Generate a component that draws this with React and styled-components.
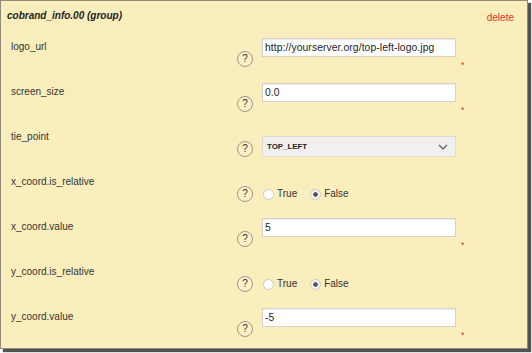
import React from "react";
import styled, { createGlobalStyle } from "styled-components";

const Global = createGlobalStyle`
  html, body { margin: 0; padding: 0; background: #ffffff; }
  body { width: 532px; height: 353px; overflow: hidden; font-family: "Liberation Sans", Arial, sans-serif; }
`;

const Panel = styled.div`
  box-sizing: border-box;
  width: 528px;
  height: 349px;
  background: #faeebd;
  border: 1px solid #8e8a7c;
  box-shadow: 3px 3px 1px rgba(0, 0, 0, 0.68);
  display: flex;
  flex-direction: column;
  overflow: hidden;
`;

const Header = styled.div`
  flex: none;
  height: 37px;
  display: flex;
  align-items: flex-start;
  justify-content: space-between;
  padding: 0 13px 0 6px;
  box-sizing: border-box;
`;

const Title = styled.div`
  margin-top: 9px;
  font-size: 10px;
  line-height: 12px;
  font-weight: bold;
  font-style: italic;
  color: #222;
`;

const Delete = styled.a`
  margin-top: 11px;
  font-size: 10px;
  line-height: 12px;
  color: #e8332f;
  cursor: pointer;
`;

const Row = styled.div`
  flex: none;
  height: 45px;
  display: flex;
  align-items: flex-start;
`;

const Label = styled.div`
  box-sizing: border-box;
  width: 236px;
  padding-left: 10px;
  margin-top: 3px;
  font-size: 10px;
  line-height: 12px;
  color: #333;
`;

const Help = styled.div`
  box-sizing: border-box;
  width: 16px;
  height: 16px;
  margin-top: 13px;
  border-radius: 50%;
  border: 1px solid #9a968a;
  display: flex;
  align-items: center;
  justify-content: center;
  font-size: 10px;
  line-height: 10px;
  color: #333;
  flex: none;
  background: #fbf1c8;
`;

const Control = styled.div`
  width: 194px;
  margin-left: 9px;
  margin-top: ${(p) => p.$top || 0}px;
  display: flex;
  align-items: center;
  flex: none;
`;

const TextInput = styled.input`
  box-sizing: border-box;
  width: 194px;
  height: 19px;
  margin: 0;
  border: 1px solid #d6d2c4;
  box-shadow: inset 0 1px 1px rgba(0, 0, 0, 0.08);
  background: #fff;
  padding: 0 2px;
  font-family: "Liberation Sans", Arial, sans-serif;
  font-size: 10.3px;
  letter-spacing: 0.1px;
  color: #222;
  outline: none;
`;

const Select = styled.div`
  box-sizing: border-box;
  width: 195px;
  height: 21px;
  border: 1px solid #dedbd2;
  background: #f1f0ee;
  display: flex;
  align-items: center;
  justify-content: space-between;
  padding: 0 7px 0 4px;
  font-size: 7.9px;
  font-weight: bold;
  color: #222;
`;

const Radios = styled.div`
  display: flex;
  align-items: center;
`;

const RadioCircle = styled.span`
  box-sizing: border-box;
  width: 11px;
  height: 11px;
  border-radius: 50%;
  border: 1px solid #cfcbbd;
  background: ${(p) => (p.$on ? "radial-gradient(circle, #555 0 2px, #f4f4f4 2.5px)" : "#fff")};
  margin-left: ${(p) => (p.$first ? 1 : 13)}px;
  flex: none;
`;

const RadioText = styled.span`
  margin-left: 3px;
  font-size: 10px;
  line-height: 12px;
  color: #333;
`;

const Req = styled.span`
  margin-left: 5px;
  margin-top: ${(p) => p.$top}px;
  font-size: 9px;
  line-height: 9px;
  color: #e0302a;
  align-self: flex-start;
`;

const Chevron = () => (
  <svg width="10" height="6" viewBox="0 0 10 6">
    <path d="M1 1 L5 5 L9 1" fill="none" stroke="#555" strokeWidth="1.2" />
  </svg>
);

const rows = [
  { label: "logo_url", type: "text", value: "http://yourserver.org/top-left-logo.jpg" },
  { label: "screen_size", type: "text", value: "0.0" },
  { label: "tie_point", type: "select", value: "TOP_LEFT" },
  { label: "x_coord.is_relative", type: "radio" },
  { label: "x_coord.value", type: "text", value: "5" },
  { label: "y_coord.is_relative", type: "radio" },
  { label: "y_coord.value", type: "text", value: "-5" },
];

export default function App() {
  return (
    <>
      <Global />
      <Panel>
        <Header>
          <Title>cobrand_info.00 (group)</Title>
          <Delete>delete</Delete>
        </Header>
        {rows.map((r) => (
          <Row key={r.label}>
            <Label>{r.label}</Label>
            <Help>?</Help>
            {r.type === "text" && (
              <>
                <Control>
                  <TextInput defaultValue={r.value} />
                </Control>
                <Req $top={23}>*</Req>
              </>
            )}
            {r.type === "select" && (
              <Control $top={8}>
                <Select>
                  <span>{r.value}</span>
                  <Chevron />
                </Select>
              </Control>
            )}
            {r.type === "radio" && (
              <Control $top={15}>
                <Radios>
                  <RadioCircle $first />
                  <RadioText>True</RadioText>
                  <RadioCircle $on />
                  <RadioText>False</RadioText>
                </Radios>
              </Control>
            )}
          </Row>
        ))}
      </Panel>
    </>
  );
}
